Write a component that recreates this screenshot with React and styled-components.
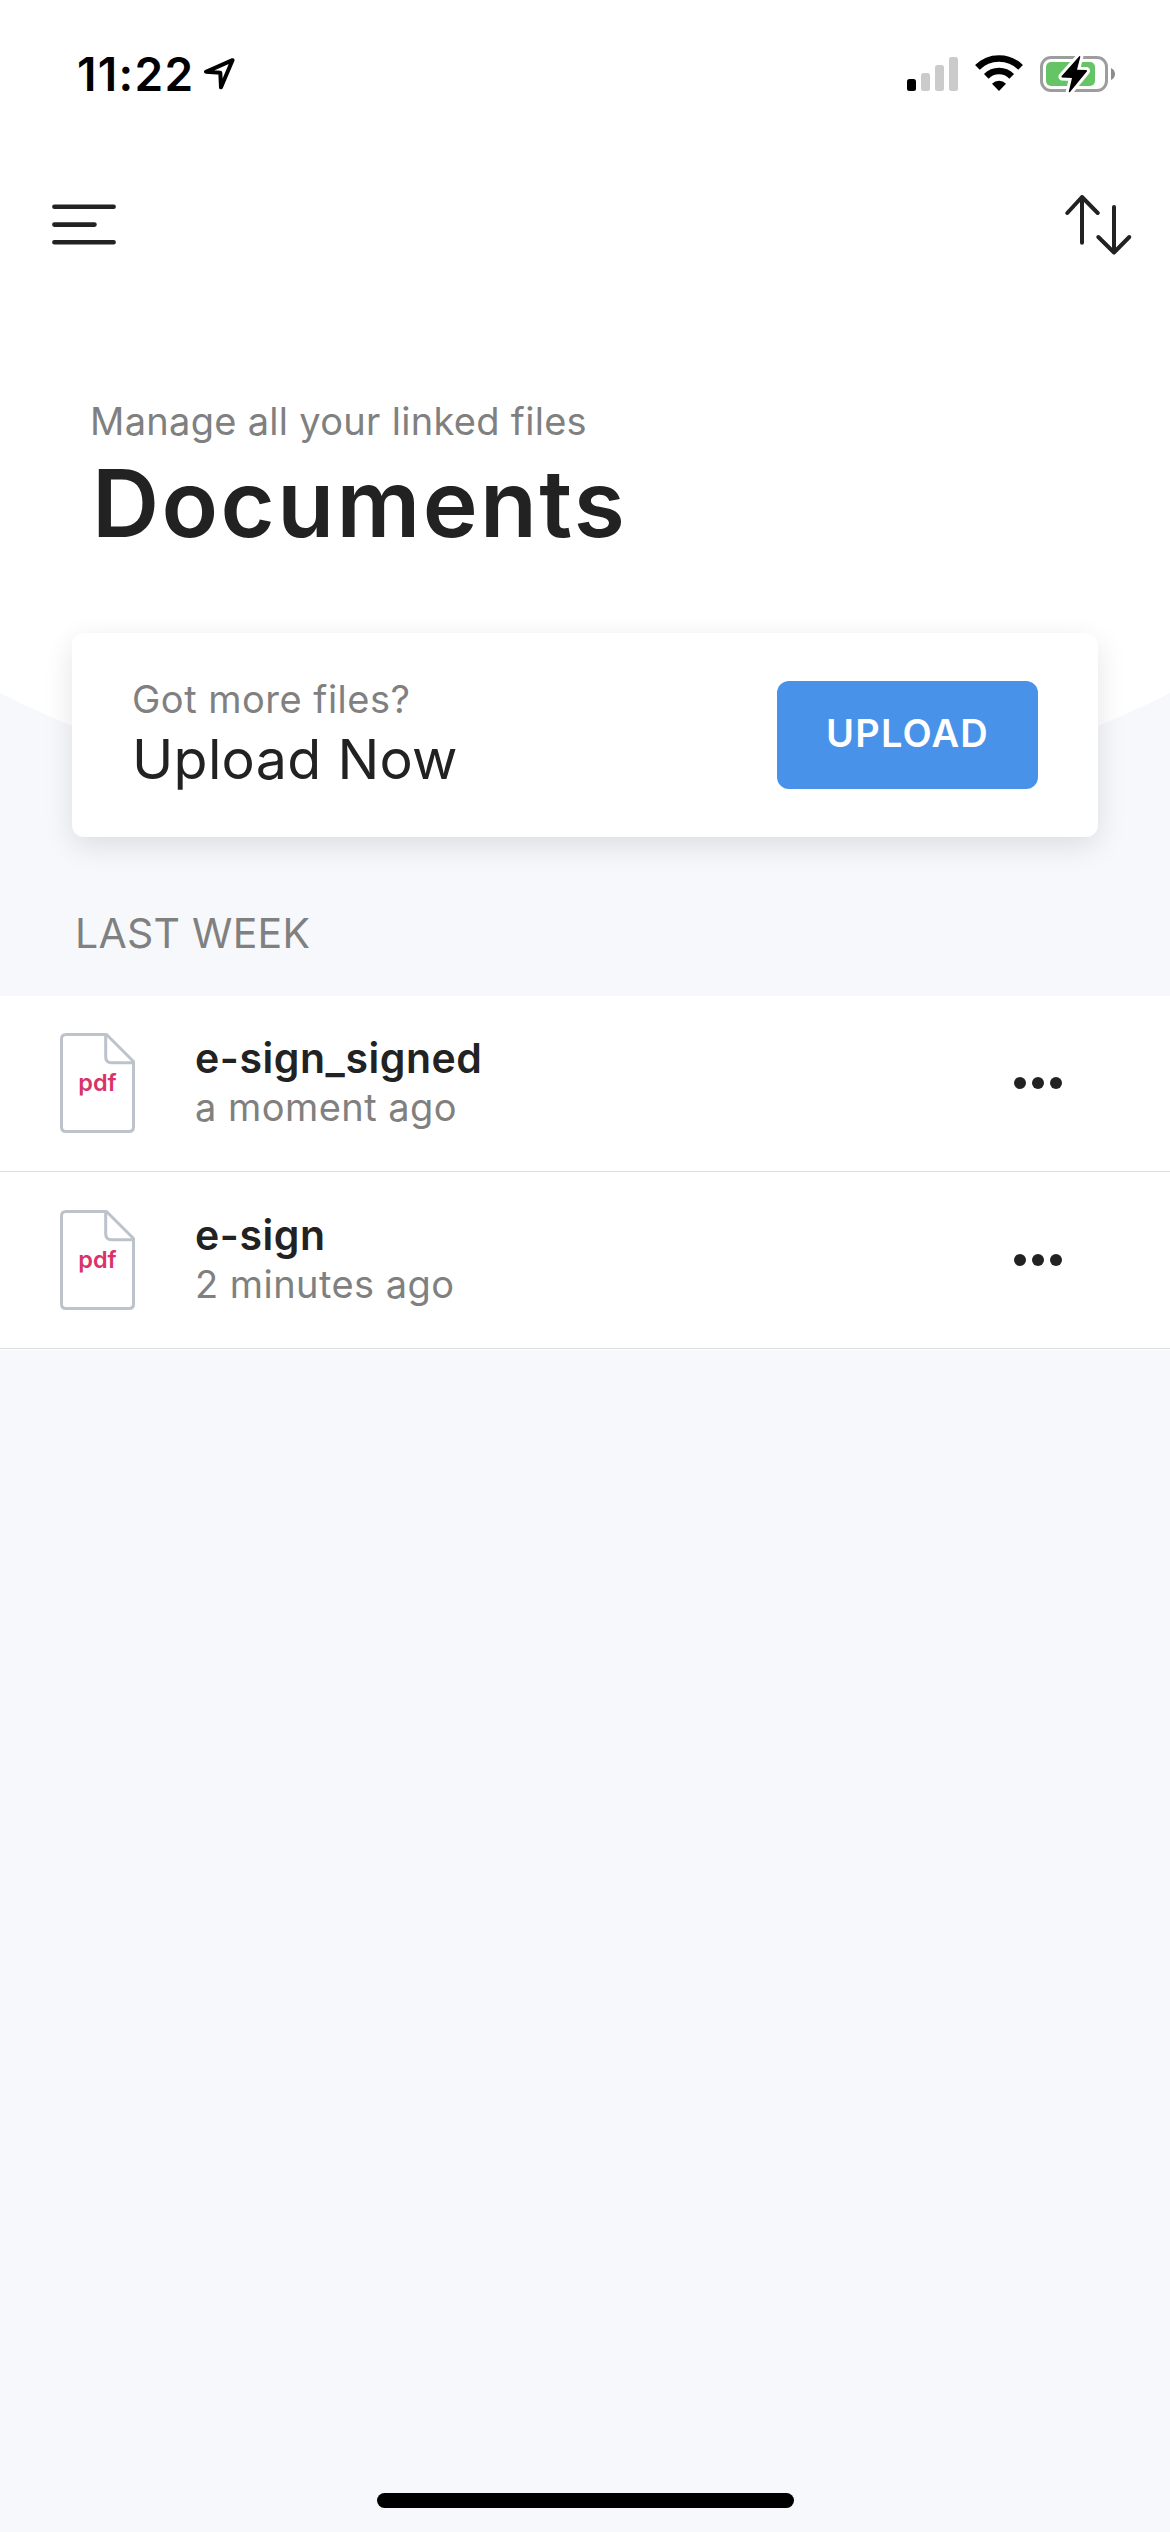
import React from "react";
import styled, { createGlobalStyle } from "styled-components";

const files = [
  { name: "e-sign_signed", time: "a moment ago", type: "pdf" },
  { name: "e-sign", time: "2 minutes ago", type: "pdf" },
];

const StatusIcons = () => (
  <svg width="208" height="38" viewBox="0 0 208 38" fill="none">
    <rect x="0" y="24" width="9" height="12" rx="2.5" fill="#000" />
    <rect x="14" y="18" width="9" height="18" rx="2.5" fill="#cbcbcb" />
    <rect x="28" y="10" width="9" height="26" rx="2.5" fill="#cbcbcb" />
    <rect x="42" y="2" width="9" height="34" rx="2.5" fill="#cbcbcb" />
    <path d="M70.4 12.4 A30.5 30.5 0 0 1 113.6 12.4" stroke="#000" strokeWidth="6.6" />
    <path d="M79.3 21.3 A18 18 0 0 1 104.7 21.3" stroke="#000" strokeWidth="6.6" />
    <path d="M85 28.7 A10 10 0 0 1 99 28.7 L92 36 Z" fill="#000" />
    <rect x="134.5" y="2.5" width="65" height="33" rx="9.5" stroke="#9d9d9d" strokeWidth="3" />
    <rect x="139" y="7" width="49" height="24" rx="5" fill="#65c466" />
    <path d="M204 13 Q208 15 208 19 Q208 23 204 25 Z" fill="#8c8c8c" />
    <path
      d="M172.5 1 Q173.500 1 173.300 2 L170 14.800 L179.500 15 Q180.500 15.500 179.800 16.500 L163 37 Q162 37.800 161.800 36.500 L165 23 L155 22.500 Q154 22 154.700 21 Z"
      fill="#000"
      stroke="#fff"
      strokeWidth="6"
      strokeLinejoin="round"
      paintOrder="stroke"
    />
  </svg>
);

const LocationArrow = () => (
  <svg width="33" height="34" viewBox="0 0 33 34" fill="none">
    <path
      d="M30.5 3.200 L4 14.800 L18.300 15.700 L19 30.300 Z"
      stroke="#000"
      strokeWidth="4"
      strokeLinejoin="round"
    />
  </svg>
);

const MenuIcon = () => (
  <svg width="64" height="42" viewBox="0 0 64 42" stroke="#222" strokeWidth="4.6" strokeLinecap="round">
    <path d="M2.4 2.700 H61.600 M2.400 20.600 H42.500 M2.400 38.300 H61.600" />
  </svg>
);

const SortIcon = () => (
  <svg width="68" height="62" viewBox="0 0 68 62" fill="none" stroke="#222" strokeWidth="4" strokeLinecap="round" strokeLinejoin="round">
    <path d="M17 48.800 V3 M2.300 19 L17 3 L32.700 19" />
    <path d="M49 13 V58.500 M33.300 43 L49 58.500 L64.300 43" />
  </svg>
);

const FileOutline = () => (
  <svg width="75" height="100" viewBox="0 0 75 100" fill="none" stroke="#bcc3ca" strokeWidth="3" strokeLinejoin="round">
    <path d="M46.5 1.500 H6 Q1.500 1.500 1.500 6 V94 Q1.500 98.500 6 98.500 H69 Q73.500 98.500 73.500 94 V28.500 Z" />
    <path d="M45.7 1.500 V24 Q45.700 29.700 51.500 29.700 H73.500" />
  </svg>
);

const MoreIcon = () => (
  <svg width="48" height="12" viewBox="0 0 48 12" fill="#222">
    <circle cx="6" cy="6" r="6" />
    <circle cx="24" cy="6" r="6" />
    <circle cx="42" cy="6" r="6" />
  </svg>
);

const App = () => {
  return (
    <>
      <GlobalStyle />
      <Screen>
        <Header>
          <StatusBar>
            <Clock>
              <Time>11:22</Time>
              <LocationArrow />
            </Clock>
            <StatusIcons />
          </StatusBar>
          <NavBar>
            <IconButton aria-label="Menu">
              <MenuIcon />
            </IconButton>
            <IconButton aria-label="Sort">
              <SortIcon />
            </IconButton>
          </NavBar>
          <Intro>
            <Hint $spacing="0.3px">Manage all your linked files</Hint>
            <Title>Documents</Title>
          </Intro>
        </Header>

        <UploadCard>
          <div>
            <Hint $spacing="0.5px">Got more files?</Hint>
            <CardTitle>Upload Now</CardTitle>
          </div>
          <UploadButton>UPLOAD</UploadButton>
        </UploadCard>

        <SectionLabel>LAST WEEK</SectionLabel>
        <FileList>
          {files.map((file) => (
            <FileRow key={file.name}>
              <FileIcon>
                <FileOutline />
                <FileType>{file.type}</FileType>
              </FileIcon>
              <FileInfo>
                <FileName>{file.name}</FileName>
                <Hint $spacing="0.45px">{file.time}</Hint>
              </FileInfo>
              <IconButton aria-label="More">
                <MoreIcon />
              </IconButton>
            </FileRow>
          ))}
        </FileList>

        <HomeIndicator />
      </Screen>
    </>
  );
};

const GlobalStyle = createGlobalStyle`
  * {
    box-sizing: border-box;
  }

  body {
    margin: 0;
    background: #f7f8fc;
    font-family: Inter, "Liberation Sans", sans-serif;
    color: #222;
  }

  svg {
    display: block;
    flex-shrink: 0;
  }
`;

const Screen = styled.div`
  display: flex;
  flex-direction: column;
  width: 1170px;
  height: 2532px;
  overflow: hidden;
  position: relative;
  z-index: 0;
  background: #f7f8fc;
`;

const Header = styled.header`
  height: 633px;

  /* big white circle that gives the header its curved bottom edge */
  &::before {
    content: "";
    position: absolute;
    z-index: -1;
    top: -1806px;
    left: -733px;
    width: 2636px;
    height: 2636px;
    border-radius: 50%;
    background: #fff;
  }
`;

const StatusBar = styled.div`
  display: flex;
  justify-content: space-between;
  align-items: flex-start;
  height: 141px;
  padding: 55px 55px 0 77px;
`;

const Clock = styled.div`
  display: flex;
  align-items: center;
  gap: 8px;
  height: 38px;
`;

const Time = styled.span`
  font-size: 46px;
  font-weight: 600;
  line-height: 38px;
  letter-spacing: 1.3px;
  color: #000;
`;

const NavBar = styled.nav`
  display: flex;
  justify-content: space-between;
  align-items: center;
  height: 168px;
  padding: 0 37px 0 52px;
`;

const IconButton = styled.button`
  padding: 0;
  border: none;
  background: none;
  cursor: pointer;
`;

const Intro = styled.div`
  padding: 88px 90px 0;
`;

const Hint = styled.p`
  margin: 0;
  font-size: 38px;
  font-weight: 400;
  line-height: 48px;
  letter-spacing: ${(props) => props.$spacing};
  color: #808080;
`;

const Title = styled.h1`
  margin: 6px 0 0 2px;
  font-size: 93px;
  font-weight: 600;
  line-height: 104px;
  letter-spacing: 2.4px;
`;

const UploadCard = styled.section`
  display: flex;
  justify-content: space-between;
  align-items: center;
  height: 204px;
  margin: 0 72px;
  padding: 0 60px;
  border-radius: 12px;
  background: #fff;
  box-shadow: 0 9px 30px rgba(0, 0, 0, 0.11);
`;

const CardTitle = styled.p`
  margin: 0;
  font-size: 55.5px;
  font-weight: 400;
  line-height: 72px;
  letter-spacing: 0.3px;
`;

const UploadButton = styled.button`
  width: 261px;
  height: 108px;
  padding: 0 0 4px;
  border: none;
  border-radius: 12px;
  background: #4992ea;
  color: #fff;
  font-family: inherit;
  font-size: 38px;
  font-weight: 600;
  letter-spacing: 1.2px;
  cursor: pointer;
`;

const SectionLabel = styled.h2`
  margin: 71px 0 38px 75px;
  font-size: 41px;
  font-weight: 400;
  line-height: 50px;
  letter-spacing: 0.25px;
  color: #808080;
`;

const FileList = styled.ul`
  margin: 0;
  padding: 0 0 1px;
  list-style: none;
  background: #fff;
`;

const FileRow = styled.li`
  display: flex;
  align-items: center;
  height: 177px;
  padding: 0 108px 0 60px;
  border-bottom: 1px solid #ddd;

  &:first-child {
    height: 176px;
    padding-bottom: 1px;
  }
`;

const FileIcon = styled.div`
  position: relative;
  width: 75px;
`;

const FileType = styled.span`
  position: absolute;
  top: 35px;
  left: 0;
  width: 75px;
  text-align: center;
  font-size: 23.5px;
  font-weight: 600;
  line-height: 30px;
  color: #d8346a;
`;

const FileInfo = styled.div`
  flex: 1;
  margin-left: 60px;
  padding-bottom: 2px;
`;

const FileName = styled.p`
  margin: 0;
  font-size: 41px;
  font-weight: 600;
  line-height: 50px;
  letter-spacing: 0.55px;
`;

const HomeIndicator = styled.div`
  width: 417px;
  height: 15px;
  margin: auto 376px 24px 377px;
  border-radius: 8px;
  background: #000;
`;

export default App;
